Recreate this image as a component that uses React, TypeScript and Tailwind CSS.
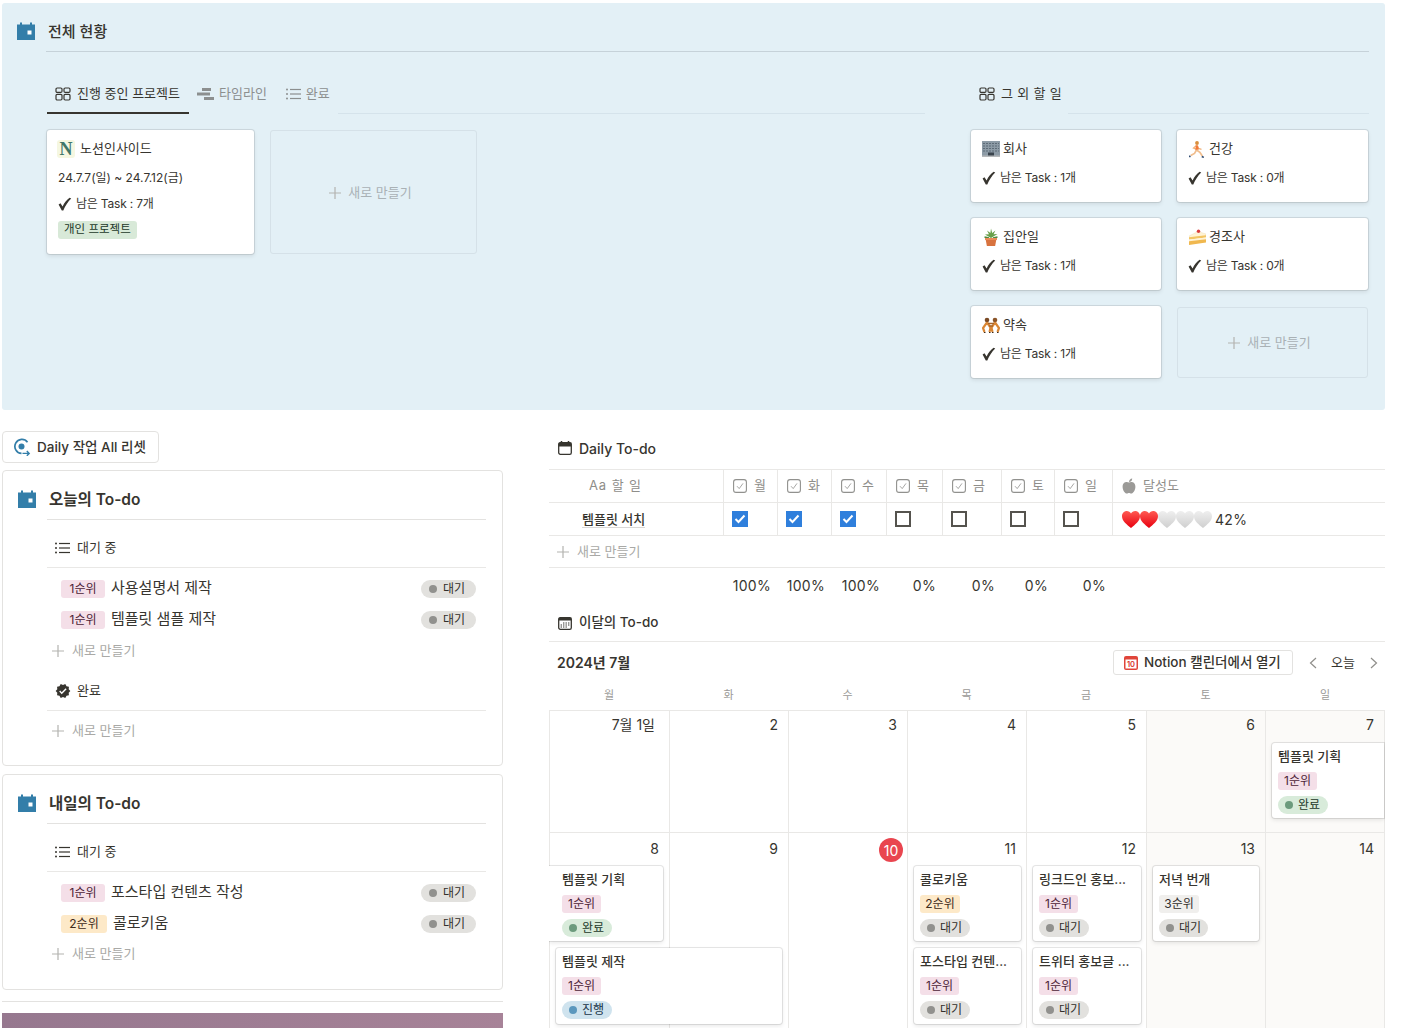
import { ReactNode } from 'react';
import { MdVerified } from 'react-icons/md';

const weekColumns = ['col-start-1', 'col-start-2', 'col-start-3', 'col-start-4', 'col-start-5', 'col-start-6', 'col-start-7'];

function CalendarBadge() {
  return (
    <svg width="18" height="18" viewBox="0 0 18 18" className="shrink-0">
      <path d="M0 2.5h3V0.5h2v2h8V0.5h2v2h3V18H0z" fill="#337ea9" />
      <rect x="10.5" y="8.5" width="4" height="4" fill="#fff" />
    </svg>
  );
}

function GalleryIcon() {
  return (
    <svg width="16" height="14" viewBox="0 0 16 14" fill="none" stroke="#37352f" strokeWidth="1.2" className="shrink-0">
      <rect x="1" y="1" width="6" height="4.4" rx="1.2" />
      <rect x="9" y="1" width="6" height="4.4" rx="1.2" />
      <rect x="1" y="7.4" width="6" height="5.6" rx="1.2" />
      <rect x="9" y="7.4" width="6" height="5.6" rx="1.2" />
    </svg>
  );
}

function TimelineIcon() {
  return (
    <svg width="17" height="14" viewBox="0 0 17 14" fill="#8c8f8f" className="shrink-0">
      <rect x="5" y="1" width="9" height="3" />
      <rect x="0" y="5.5" width="13" height="3" />
      <rect x="7" y="10" width="10" height="3" />
    </svg>
  );
}

function ListIcon({ color = '#37352f' }: { color?: string }) {
  return (
    <svg width="15" height="12" viewBox="0 0 15 12" fill={color} className="shrink-0">
      <circle cx="1" cy="1.5" r="1" />
      <circle cx="1" cy="6" r="1" />
      <circle cx="1" cy="10.5" r="1" />
      <rect x="4" y="0.9" width="11" height="1.2" />
      <rect x="4" y="5.4" width="11" height="1.2" />
      <rect x="4" y="9.9" width="11" height="1.2" />
    </svg>
  );
}

function Plus({ size = 12 }: { size?: number }) {
  return (
    <svg width={size} height={size} viewBox="0 0 12 12" fill="none" stroke="#b3b3b0" strokeWidth="1.2" className="shrink-0">
      <path d="M6 0v12M0 6h12" />
    </svg>
  );
}

function Check() {
  return (
    <svg width="14" height="14" viewBox="0 0 14 14" fill="#37352f" className="shrink-0">
      <path d="M0.6 7.6l1.9-1.3 2.1 3.2C6.3 5.8 8.6 2.7 11.6 0.8l1.6 0.8C9.9 4.9 7.3 8.9 5.3 13.6H3.8z" />
    </svg>
  );
}

function CheckProp() {
  return (
    <svg width="14" height="14" viewBox="0 0 14 14" fill="none" stroke="#91918e" className="shrink-0">
      <rect x="0.6" y="0.6" width="12.8" height="12.8" rx="2.4" strokeWidth="1.1" />
      <path d="M4 7.2l2.2 2.4L10 4.4" strokeWidth="0.8" />
    </svg>
  );
}

function NLogo() {
  return (
    <span className="-ml-[1px] w-[18px] h-[18px] rounded-[3px] bg-[#f5f7e1] flex items-center justify-center font-['Liberation_Serif',serif] font-bold text-[18px] text-[#3f7668] shrink-0">
      N
    </span>
  );
}

function Building() {
  return (
    <svg width="18" height="16" viewBox="0 0 18 16" className="shrink-0">
      <rect width="18" height="15" fill="#8d9ba6" />
      <path d="M1 2.500h16M1 5h16M1 7.500h16M1 10h16" stroke="#5d6b77" strokeWidth="1.1" strokeDasharray="2 1" />
      <rect x="6" y="11.500" width="6" height="3.500" fill="#39434c" />
      <rect x="0" y="14.500" width="18" height="1.500" fill="#b5b8ba" />
    </svg>
  );
}

function Runner() {
  return (
    <svg width="16" height="17" viewBox="0 0 16 17" fill="none" className="shrink-0">
      <circle cx="8" cy="2" r="1.9" fill="#d88f3c" />
      <path d="M7.500 4.500L4.500 7l2.600 1.200M8 4.500l1.600 3 2.900 .8" stroke="#f0b27a" strokeWidth="1.300" />
      <path d="M6.800 4.200l2.200 .2 .8 4-3.400 1z" fill="#f27a3a" />
      <path d="M7.500 9l3.400 2.300 2.400 3.700M7.500 9l-2 3.400-3.800 2" stroke="#f0bd8d" strokeWidth="1.700" />
      <path d="M12.800 15.500l2 .9M1.200 14.600l-.8 1.600" stroke="#2f4a70" strokeWidth="1.600" />
    </svg>
  );
}

function Plant() {
  return (
    <svg width="16" height="18" viewBox="0 0 16 18" className="shrink-0">
      <path d="M8 10L2 6.500 6 6.200 4 2.500 7.400 5 8 0.500 9.200 5 12.400 2.500 10.600 6.200 14.500 6 8 10z" fill="#68a04a" />
      <path d="M1.500 9l4.500 1M14.500 9L10 10" stroke="#4d8a3c" strokeWidth="1.600" />
      <path d="M2.500 10.500h11l-1.400 7.500H3.900z" fill="#d8733f" />
      <rect x="2" y="10" width="12" height="2" fill="#ea8b57" />
    </svg>
  );
}

function Cake() {
  return (
    <svg width="17" height="16" viewBox="0 0 17 16" className="shrink-0">
      <path d="M0 7L9 2.500 17 5v2L0 9z" fill="#fff3d6" stroke="#ead9ae" strokeWidth="0.4" />
      <path d="M0 8.200L17 6.200v2.400L0 10.700z" fill="#f3c563" />
      <path d="M0 10.500L17 8.500v2L0 12.500z" fill="#fff3d6" />
      <path d="M0 12.300L17 10.300v3.200L0 16z" fill="#f0b84f" />
      <circle cx="9.500" cy="2.200" r="1.700" fill="#d93a3a" />
    </svg>
  );
}

function People() {
  return (
    <svg width="18" height="16" viewBox="0 0 18 16" fill="none" className="shrink-0">
      <circle cx="5" cy="3" r="2.300" fill="#7a4a25" />
      <circle cx="13" cy="3" r="2.300" fill="#8a5428" />
      <path d="M5 5.500L1 11l1.500 4M5 5.500l3.500 5-1 4.500M13 5.500L9.500 10.500l1 4.500M13 5.500L17 11l-1.500 4" stroke="#d98736" strokeWidth="2.200" />
      <path d="M6 6.500h6M7 9h4" stroke="#a9652a" strokeWidth="1.400" />
      <path d="M2 15.500h1.500M7 15.500h1.500M10 15.500h1.500M15 15.500h1.500" stroke="#3c2a1c" strokeWidth="1" />
    </svg>
  );
}

function Apple() {
  return (
    <svg width="14" height="16" viewBox="0 0 14 16" fill="#9b9a97" className="shrink-0">
      <path d="M7 4.600C5.200 3.400 0.600 3.600 0.600 8.800c0 3.600 2.400 6.800 4.200 6.800 1 0 1.400-.5 2.200-.5s1.200.5 2.200.5c1.800 0 4.200-3.200 4.200-6.800C13.400 3.600 8.800 3.400 7 4.600z" />
      <path d="M7 4c0-2 1.200-3.400 3.200-3.600C10.200 2.400 9 3.800 7 4z" />
    </svg>
  );
}

function Heart({ on, index }: { on: boolean; index: number }) {
  const id = `heart-${index}`;
  return (
    <svg width="18" height="17" viewBox="0 0 18 17" className="shrink-0">
      <defs>
        <linearGradient id={id} x1="0" y1="0" x2="0" y2="1">
          <stop offset="0" stopColor={on ? '#ff5a52' : '#efefef'} />
          <stop offset="1" stopColor={on ? '#e8000f' : '#cfcfcf'} />
        </linearGradient>
      </defs>
      <path d="M9 17C5 13.600 0 10 0 5.200 0 2.200 2.200 0 4.800 0 6.600 0 8.200 1 9 2.600 9.800 1 11.400 0 13.200 0 15.800 0 18 2.200 18 5.200 18 10 13 13.600 9 17z" fill={`url(#${id})`} />
    </svg>
  );
}

function NotionCalIcon() {
  return (
    <svg width="14" height="14" viewBox="0 0 14 14" className="shrink-0">
      <rect width="14" height="14" rx="2" fill="#e0453a" />
      <rect x="1.500" y="3.500" width="11" height="9" fill="#fff" />
      <text x="7" y="11" textAnchor="middle" fontSize="7.500" fontWeight="600" fill="#d9342b" fontFamily="Inter, sans-serif">10</text>
    </svg>
  );
}

function SmallCalendar({ grid }: { grid?: boolean }) {
  return (
    <svg width="14" height="14" viewBox="0 0 14 14" fill="none" className="shrink-0">
      <rect x="0.700" y="1.700" width="12.600" height="11.600" rx="1.600" stroke="#37352f" strokeWidth="1.300" fill={grid ? 'none' : '#fff'} />
      <rect x="0.700" y="1.700" width="12.600" height={grid ? 2.8 : 3.8} fill="#37352f" />
      {grid ? (
        <path d="M5 7h1.400M7.500 7h1.400M10 7h1.400M2.600 9h1.400M5 9h1.400M7.500 9h1.400M10 9h1.400M2.600 11h1.400M5 11h1.400M7.500 11h1.400" stroke="#37352f" strokeWidth="1" />
      ) : (
        <path d="M3.500 0v2M10.500 0v2" stroke="#37352f" strokeWidth="1.500" />
      )}
    </svg>
  );
}

function ResetIcon() {
  return (
    <svg width="18" height="18" viewBox="0 0 18 18" fill="none" className="shrink-0">
      <path d="M14.500 4.200A7 7 0 1 0 8.500 15.400" stroke="#337ea9" strokeWidth="1.700" />
      <circle cx="8.500" cy="8.500" r="3" fill="#337ea9" />
      <path d="M9.500 15.400h6.500M13.800 13l2.400 2.400-2.400 2.400" stroke="#337ea9" strokeWidth="1.400" />
    </svg>
  );
}

function Tag({ rank, className = '' }: { rank: 1 | 2 | 3; className?: string }) {
  const tone = rank === 1 ? 'bg-[#f4dfe8] text-[#4c2337]' : rank === 2 ? 'bg-[#fde9c8] text-[#402c1b]' : 'bg-[#f0efed] text-[#32302c]';
  return <span className={`inline-flex items-center justify-center h-[18px] rounded-[3px] text-[12px] shrink-0 ${tone} ${className}`}>{rank}순위</span>;
}

function Pill({ label, className }: { label: '대기' | '완료' | '진행'; className: string }) {
  const tone =
    label === '대기'
      ? { bg: 'bg-[#e2e1de] text-[#32302c]', dot: 'bg-[#91918e]' }
      : label === '완료'
        ? { bg: 'bg-[#d8ebda] text-[#1c3829]', dot: 'bg-[#6c9b7d]' }
        : { bg: 'bg-[#cfe3ee] text-[#183347]', dot: 'bg-[#5b97bd]' };
  return (
    <span className={`inline-flex items-center h-[18px] rounded-full text-[12px] shrink-0 ${tone.bg} ${className}`}>
      <span className={`w-[8px] h-[8px] rounded-full ${tone.dot}`} />
      {label}
    </span>
  );
}

function NewRow({ className = '' }: { className?: string }) {
  return (
    <div className={`flex items-center gap-[8px] text-[13px] text-[#a9a9a6] ${className}`}>
      <Plus />
      새로 만들기
    </div>
  );
}

function Ghost({ className }: { className: string }) {
  return (
    <div className={`flex items-center justify-center gap-[7px] pr-[6px] rounded-[3px] border border-[#d5e1e8] text-[13px] text-[#a9b1b5] ${className}`}>
      <Plus />
      새로 만들기
    </div>
  );
}

const cardBox = 'bg-white rounded-[3px] shadow-[0_0_0_1px_rgba(15,15,15,0.1),0_2px_4px_rgba(15,15,15,0.1)]';

function TaskLine({ count }: { count: number }) {
  return (
    <div className="flex items-center gap-[4px] text-[12px] tracking-[-0.2px] text-[#37352f]">
      <Check />
      남은 Task : {count}개
    </div>
  );
}

function OtherCard({ icon, title, count }: { icon: ReactNode; title: string; count: number }) {
  return (
    <div className={`${cardBox} h-[72px] pl-[11px] pt-[9px]`}>
      <div className="flex items-center gap-[3px] h-[20px] text-[13px] text-[#37352f]">
        <span className="w-[18px] flex justify-center">{icon}</span>
        {title}
      </div>
      <div className="mt-[10px]">
        <TaskLine count={count} />
      </div>
    </div>
  );
}

function Overview() {
  return (
    <section className="ml-[2px] mt-[3px] w-[1383px] h-[407px] bg-[#e3f0f6] rounded-[3px] pl-[15px] pr-[16px] pt-[18px] flex">
      <div className="w-[29px] pt-[1px]">
        <CalendarBadge />
      </div>
      <div className="flex-1">
        <h1 className="h-[31px] border-b border-[#c6d2d9] text-[15px] leading-[22px] font-medium text-[#37352f] pl-[2px]">전체 현황</h1>
        <div className="flex mt-[23px]">
          <div className="w-[879px]">
            <div className="flex items-stretch h-[39px] text-[13px]">
              <div className="ml-[1px] w-[142px] pl-[8px] flex items-center gap-[6px] border-b-2 border-[#37352f] text-[#37352f]">
                <GalleryIcon />
                진행 중인 프로젝트
              </div>
              <div className="ml-[8px] flex items-center gap-[5px] text-[#8c8f8f] pb-[2px]">
                <TimelineIcon />
                타임라인
              </div>
              <div className="ml-[19px] flex items-center gap-[5px] text-[#8c8f8f] pb-[2px]">
                <ListIcon color="#8c8f8f" />
                완료
              </div>
              <div className="ml-[8px] flex-1 border-b border-[#d5e3eb]" />
            </div>
            <div className="flex mt-[16px] gap-[16px] items-start">
              <div className={`${cardBox} ml-[1px] w-[207px] h-[124px] pl-[11px] pt-[9px]`}>
                <div className="flex items-center gap-[5px] h-[20px] text-[13px] text-[#37352f]">
                  <NLogo />
                  노션인사이드
                </div>
                <div className="text-[12px] text-[#37352f] mt-[11px] h-[16px] leading-[16px]">24.7.7(일) ~ 24.7.12(금)</div>
                <div className="mt-[9px]">
                  <TaskLine count={7} />
                </div>
                <div className="mt-[8px] flex">
                  <span className="flex items-center h-[18px] px-[6px] rounded-[3px] bg-[#d8e9d8] text-[11.5px] text-[#1c3829]">개인 프로젝트</span>
                </div>
              </div>
              <Ghost className="w-[207px] h-[124px] pt-[2px]" />
            </div>
          </div>
          <div className="ml-[45px] w-[399px]">
            <div className="flex items-stretch h-[39px]">
              <div className="pl-[9px] pb-[2px] flex items-center gap-[6px] text-[13px] tracking-[0.3px] text-[#37352f] w-[98px] whitespace-nowrap">
                <GalleryIcon />
                그 외 할 일
              </div>
              <div className="flex-1 border-b border-[#d5e3eb]" />
            </div>
            <div className="grid grid-cols-[190px_191px] gap-x-[16px] gap-y-[16px] mt-[16px] ml-[1px]">
              <OtherCard icon={<Building />} title="회사" count={1} />
              <OtherCard icon={<Runner />} title="건강" count={0} />
              <OtherCard icon={<Plant />} title="집안일" count={1} />
              <OtherCard icon={<Cake />} title="경조사" count={0} />
              <OtherCard icon={<People />} title="약속" count={1} />
              <Ghost className="h-[71px] mt-[1px]" />
            </div>
          </div>
        </div>
      </div>
    </section>
  );
}

function TodoRow({ rank, title }: { rank: 1 | 2; title: string }) {
  return (
    <div className="flex items-center h-[31px] pl-[14px] pr-[10px]">
      <Tag rank={rank} className={rank === 1 ? 'w-[44px]' : 'w-[46px]'} />
      <span className="ml-[6px] text-[15px] text-[#37352f]">{title}</span>
      <Pill label="대기" className="ml-auto w-[55px] pl-[8px] gap-[6px]" />
    </div>
  );
}

function TodoCard({ title, children, className }: { title: string; children: ReactNode; className: string }) {
  return (
    <div className={`border border-[#e3e2e0] rounded-[4px] flex pl-[15px] pr-[16px] pt-[18px] ${className}`}>
      <div className="w-[29px] pt-[1px]">
        <CalendarBadge />
      </div>
      <div className="flex-1">
        <h2 className="h-[31px] border-b border-[#e3e2e0] text-[15.5px] leading-[22px] font-semibold text-[#37352f] pl-[2px]">{title}</h2>
        {children}
      </div>
    </div>
  );
}

function SectionHead({ icon, label, className = '' }: { icon: ReactNode; label: string; className?: string }) {
  return (
    <div className={`h-[48px] pt-[9px] flex items-center gap-[7px] pl-[8px] border-b border-[#e9e8e6] text-[13px] text-[#37352f] ${className}`}>
      {icon}
      {label}
    </div>
  );
}

function LeftColumn() {
  return (
    <div className="w-[501px] shrink-0">
      <button className="flex items-center gap-[6px] h-[32px] w-[157px] pl-[10px] border border-[#e3e2e0] rounded-[4px] text-[13.5px] font-medium text-[#37352f]">
        <ResetIcon />
        Daily 작업 All 리셋
      </button>
      <TodoCard title="오늘의 To-do" className="mt-[7px] h-[296px]">
        <SectionHead icon={<ListIcon />} label="대기 중" />
        <div className="pt-[5px]">
          <TodoRow rank={1} title="사용설명서 제작" />
          <TodoRow rank={1} title="템플릿 샘플 제작" />
        </div>
        <NewRow className="pl-[5px] mt-[6px] h-[20px]" />
        <SectionHead icon={<MdVerified size={16} color="#37352f" />} label="완료" className="mt-[2px] !gap-[6px]" />
        <NewRow className="pl-[5px] mt-[10px] h-[20px]" />
      </TodoCard>
      <TodoCard title="내일의 To-do" className="mt-[8px] h-[216px]">
        <SectionHead icon={<ListIcon />} label="대기 중" />
        <div className="pt-[5px]">
          <TodoRow rank={1} title="포스타입 컨텐츠 작성" />
          <TodoRow rank={2} title="콜로키움" />
        </div>
        <NewRow className="pl-[5px] mt-[5px] h-[20px]" />
      </TodoCard>
      <div className="mt-[11px] border-t border-[#e3e2e0]" />
      <div className="mt-[11px] h-[40px] bg-gradient-to-r from-[#96788f] to-[#a78398]" />
    </div>
  );
}

const days = ['월', '화', '수', '목', '금', '토', '일'];
const tableCols = 'grid grid-cols-[174px_54px_54px_55px_56px_59px_53px_58px_1fr]';
const checked = [true, true, true, false, false, false, false];
const percents = ['100%', '100%', '100%', '0%', '0%', '0%', '0%'];

function DailyTable() {
  return (
    <div className="text-[#37352f]">
      <div className={`${tableCols} h-[34px] border-y border-[#e9e8e6] text-[13px] text-[#8f8e8a]`}>
        <div className="pl-[40px] flex items-center tracking-[0.9px]">Aa 할 일</div>
        {days.map((d) => (
          <div key={d} className="border-l border-[#e9e8e6] pl-[9px] flex items-center gap-[7px]">
            <CheckProp />
            {d}
          </div>
        ))}
        <div className="border-l border-[#e9e8e6] pl-[9px] flex items-center gap-[7px]">
          <Apple />
          달성도
        </div>
      </div>
      <div className={`${tableCols} h-[33px] border-b border-[#e9e8e6]`}>
        <div className="pl-[33px] flex items-center">
          <span className="text-[13px] font-medium border-b border-[#d9d8d6] leading-[16px]">템플릿 서치</span>
        </div>
        {checked.map((on, i) => (
          <div key={i} className="border-l border-[#e9e8e6] pl-[8px] flex items-center">
            {on ? (
              <span className="w-[16px] h-[16px] bg-[#2f7fdc] flex items-center justify-center">
                <svg width="12" height="10" viewBox="0 0 12 10" fill="none" stroke="#fff" strokeWidth="2">
                  <path d="M1.500 5l3 3 6-6.500" />
                </svg>
              </span>
            ) : (
              <span className="w-[16px] h-[16px] border-2 border-[#55534e]" />
            )}
          </div>
        ))}
        <div className="border-l border-[#e9e8e6] pl-[9px] flex items-center">
          {[true, true, false, false, false].map((on, i) => (
            <Heart key={i} index={i} on={on} />
          ))}
          <span className="ml-[3px] text-[14px] tracking-[0.3px]">42%</span>
        </div>
      </div>
      <NewRow className="h-[32px] pl-[8px] border-b border-[#e9e8e6]" />
      <div className={`${tableCols} h-[35px] text-[14px] tracking-[0.3px]`}>
        <div />
        {percents.map((p, i) => (
          <div key={i} className="flex items-center justify-end pr-[6px]">
            {p}
          </div>
        ))}
      </div>
    </div>
  );
}

type EventData = { title: string; rank: 1 | 2 | 3; status: '대기' | '완료' | '진행'; place: string; width?: string };

function EventCard({ title, rank, status, place, width }: EventData) {
  return (
    <div className={`${cardBox} pl-[6px] pt-[4px] overflow-hidden z-10 ${place}`}>
      <div className="text-[13px] font-medium text-[#37352f] leading-[18px] whitespace-nowrap">{title}</div>
      <div className="mt-[7px] flex">
        <Tag rank={rank} className={rank === 1 ? 'w-[39px]' : 'w-[40px]'} />
      </div>
      <div className="mt-[6px] flex">
        <Pill label={status} className={`pl-[7px] gap-[5px] ${width ?? 'w-[50px]'}`} />
      </div>
    </div>
  );
}

const gridWeek = 'grid grid-cols-[120px_119px_119px_119px_120px_119px_120px] border-t border-[#e9e8e6] overflow-hidden';

function WeekCells({ labels, span, labelTop }: { labels: string[]; span: string; labelTop: string }) {
  return (
    <>
      {labels.map((label, i) => (
        <div
          key={label}
          className={`${weekColumns[i]} row-start-1 ${span} border-l border-[#e9e8e6] ${i > 4 ? 'bg-[#fbfaf8]' : ''} ${i === 6 ? 'border-r' : ''} flex justify-end text-[14px] text-[#37352f] h-full`}
        >
          {label === '10' ? (
            <span className="mt-[5px] mr-[4px] w-[24px] h-[24px] rounded-full bg-[#e9454f] text-white flex items-center justify-center">10</span>
          ) : (
            <span className={`${labelTop} leading-[18px] ${label === '7월 1일' ? 'pr-[14px]' : 'pr-[10px]'}`}>{label}</span>
          )}
        </div>
      ))}
    </>
  );
}

function Calendar() {
  return (
    <div className="text-[#37352f]">
      <div className="mt-[9px] h-[21px] flex items-center gap-[7px] text-[13.5px] font-medium pl-[9px]">
        <SmallCalendar grid />
        이달의 To-do
      </div>
      <div className="mt-[8px] border-t border-[#e9e8e6] h-[42px] flex items-center pl-[8px]">
        <span className="text-[14px] font-semibold">2024년 7월</span>
        <div className="ml-auto flex items-center">
          <button className="h-[25px] w-[180px] border border-[#e3e2e0] rounded-[3px] flex items-center gap-[6px] pl-[10px] text-[13.5px] font-medium">
            <NotionCalIcon />
            Notion 캘린더에서 열기
          </button>
          <svg width="8" height="12" viewBox="0 0 8 12" fill="none" stroke="#8f8e8a" strokeWidth="1.200" className="ml-[16px]">
            <path d="M7 1L1.500 6 7 11" />
          </svg>
          <span className="ml-[14px] text-[13px] w-[24px] whitespace-nowrap">오늘</span>
          <svg width="8" height="12" viewBox="0 0 8 12" fill="none" stroke="#8f8e8a" strokeWidth="1.200" className="ml-[15px] mr-[7px]">
            <path d="M1 1l5.500 5L1 11" />
          </svg>
        </div>
      </div>
      <div className="grid grid-cols-[120px_119px_119px_119px_120px_119px_120px] h-[27px] pb-[3px] text-[11px] text-[#9b9a97]">
        {days.map((d) => (
          <div key={d} className="flex items-center justify-center">
            {d}
          </div>
        ))}
      </div>
      <div className={`${gridWeek} grid-rows-[32px_75px_14px]`}>
        <WeekCells labels={['7월 1일', '2', '3', '4', '5', '6', '7']} span="row-span-3" labelTop="mt-[5px]" />
        <EventCard title="템플릿 기획" rank={1} status="완료" place="col-start-7 row-start-2 ml-[7px] mr-[1px] !rounded-r-none" />
      </div>
      <div className={`${gridWeek} grid-rows-[33px_75px_7px_76px_10px]`}>
        <WeekCells labels={['8', '9', '10', '11', '12', '13', '14']} span="row-span-5" labelTop="mt-[7px]" />
        <EventCard title="템플릿 기획" rank={1} status="완료" place="col-start-1 row-start-2 mr-[6px] !rounded-l-none !pl-[13px]" />
        <EventCard title="템플릿 제작" rank={1} status="진행" place="col-start-1 col-span-2 row-start-4 ml-[7px] mr-[6px]" />
        <EventCard title="콜로키움" rank={2} status="대기" place="col-start-4 row-start-2 ml-[7px] mr-[5px]" />
        <EventCard title="포스타입 컨텐..." rank={1} status="대기" place="col-start-4 row-start-4 ml-[7px] mr-[5px]" />
        <EventCard title="링크드인 홍보..." rank={1} status="대기" place="col-start-5 row-start-2 ml-[7px] mr-[5px]" />
        <EventCard title="트위터 홍보글 ..." rank={1} status="대기" place="col-start-5 row-start-4 ml-[7px] mr-[5px]" />
        <EventCard title="저녁 번개" rank={3} status="대기" place="col-start-6 row-start-2 ml-[7px] mr-[6px]" width="w-[49px]" />
      </div>
    </div>
  );
}

export default function App() {
  return (
    <div className="w-[1401px] h-[1028px] overflow-hidden bg-white font-[Inter,'Noto_Sans_CJK_KR',sans-serif] antialiased">
      <Overview />
      <div className="flex mt-[21px] ml-[2px] gap-[46px]">
        <LeftColumn />
        <div className="w-[836px] shrink-0">
          <div className="h-[38px] pt-[7px] flex items-start gap-[7px] pl-[9px] text-[14px] font-medium text-[#37352f]">
            <span className="pt-[3px]">
              <SmallCalendar />
            </span>
            Daily To-do
          </div>
          <DailyTable />
          <Calendar />
        </div>
      </div>
    </div>
  );
}
